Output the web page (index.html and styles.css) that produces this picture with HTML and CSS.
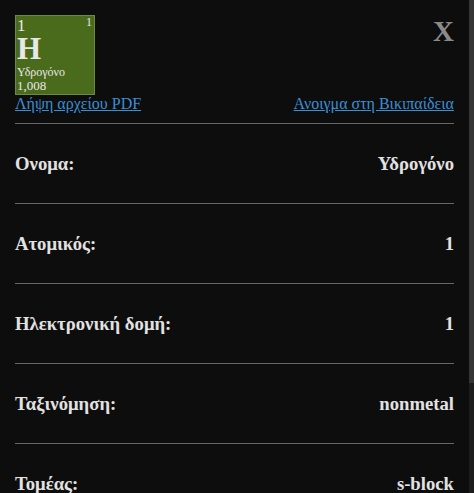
FILE: index.html
```html
<!DOCTYPE html>
<html lang="el">
<head>
<meta charset="utf-8">
<link rel="stylesheet" href="styles.css">
</head>
<body>
<div class="panel">
  <div class="top">
    <div class="tile">
      <div class="tile-row">
        <span class="num">1</span>
        <span class="num-small">1</span>
      </div>
      <div class="sym">H</div>
      <div class="name">Υδρογόνο</div>
      <div class="mass">1,008</div>
    </div>
    <div class="close">X</div>
  </div>
  <div class="links">
    <a href="#">Λήψη αρχείου PDF</a>
    <a href="#">Ανοιγμα στη Βικιπαίδεια</a>
  </div>
  <div class="rows">
    <div class="row"><span>Ονομα:</span><span>Υδρογόνο</span></div>
    <div class="row"><span>Ατομικός:</span><span>1</span></div>
    <div class="row"><span>Ηλεκτρονική δομή:</span><span>1</span></div>
    <div class="row"><span>Ταξινόμηση:</span><span>nonmetal</span></div>
    <div class="row"><span>Τομέας:</span><span>s-block</span></div>
  </div>
</div>
<div class="scrollbar"><div class="thumb"></div></div>
</body>
</html>
```
FILE: styles.css
```css
html, body {
  margin: 0;
  height: 493px;
  overflow: hidden;
  background: #0d0d0d;
}
body {
  font-family: "Liberation Serif", "Times New Roman", serif;
  color: #e2e2e2;
}
.panel {
  width: 439px;
  padding: 15px 0 0 15px;
}
.top {
  display: flex;
  justify-content: space-between;
  align-items: flex-start;
}
.tile {
  background: #4a6a1c;
  border: 1px solid #6c8a44;
  color: #e8e8e8;
  padding: 0 2px 0 1px;
  box-sizing: border-box;
  width: 80px;
  height: 80px;
  display: flex;
  flex-direction: column;
}
.tile-row {
  display: flex;
  justify-content: space-between;
  align-items: flex-start;
  height: 16px;
}
.num {
  font-size: 17px;
  line-height: 17px;
  margin-top: 1px;
}
.num-small {
  font-size: 12px;
  line-height: 12px;
}
.sym {
  font-size: 31px;
  font-weight: bold;
  line-height: 34px;
}
.name {
  font-size: 12px;
  line-height: 14px;
  margin-top: -1px;
}
.mass {
  font-size: 13px;
  line-height: 14px;
}
.close {
  font-size: 29px;
  font-weight: bold;
  color: #8a8a8a;
  line-height: 30px;
  margin-top: 1px;
}
.links {
  display: flex;
  justify-content: space-between;
  font-size: 16px;
  line-height: 18px;
  padding-bottom: 10px;
  border-bottom: 1px solid #666;
}
.links a {
  color: #3b8fd6;
  text-decoration: underline;
}
.row {
  display: flex;
  justify-content: space-between;
  align-items: center;
  height: 79px;
  border-bottom: 1px solid #666;
  font-weight: bold;
  font-size: 18.7px;
}
.scrollbar {
  position: fixed;
  top: 0;
  right: 0;
  width: 5px;
  height: 493px;
  background: #1c1c1c;
}
.thumb {
  height: 383px;
  background: #353535;
}
```
